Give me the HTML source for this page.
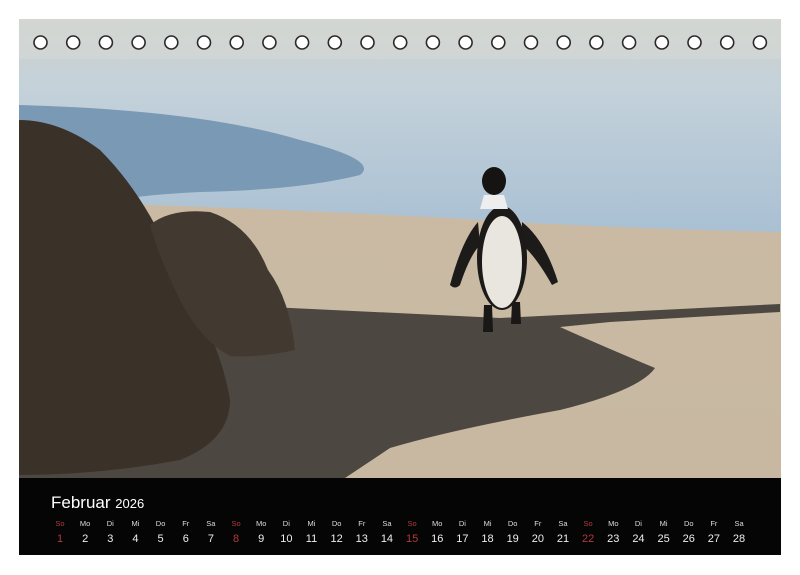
<!DOCTYPE html>
<html><head><meta charset="utf-8"><style>
body{margin:0;width:800px;height:575px;background:#fff;overflow:hidden;font-family:"Liberation Sans",sans-serif;position:relative}
.cal{position:absolute;left:19px;top:478px;width:762px;height:77px;background:#050505}
.t{position:absolute;left:32px;top:15px;color:#fff;font-size:17px}
.t span{font-size:13px}
.d{position:absolute;width:30px;text-align:center;color:#eee}
.n{font-size:7.5px;top:41px;color:#ddd}
.v{font-size:11px;top:55px}
.r{color:#b3393f}
</style></head><body>
<svg width="800" height="575" style="position:absolute;left:0;top:0">
<defs>
<linearGradient id="w" x1="0" y1="0" x2="0" y2="1"><stop offset="0" stop-color="#cfd1cc"/><stop offset="0.3" stop-color="#c5d2da"/><stop offset="1" stop-color="#a9c0d3"/></linearGradient>
<linearGradient id="s" x1="0" y1="0" x2="0" y2="1"><stop offset="0" stop-color="#cbbca7"/><stop offset="1" stop-color="#c8b8a1"/></linearGradient>
</defs>
<rect x="19" y="19" width="762" height="459" fill="url(#s)"/>
<path d="M19 19H781V232Q600 228 450 218Q300 210 150 205L19 200Z" fill="url(#w)"/>
<rect x="19" y="19" width="762" height="40" fill="#d6d8d5" opacity=".6"/>
<path d="M19 105Q200 110 300 140Q380 160 360 175Q300 190 200 192Q140 195 120 200L19 200Z" fill="#7a99b5"/>
<path d="M250 306L500 318L780 304L780 312L610 322L560 327Q600 345 655 368Q640 390 560 410Q450 430 390 448L345 478H19V380L230 330Z" fill="#4d4741"/>
<path d="M19 120Q60 120 100 150Q150 200 180 280Q220 340 230 400Q230 440 180 460Q100 475 19 475Z" fill="#3a3129"/>
<path d="M150 225Q170 208 210 212Q250 225 268 270Q290 300 295 350Q260 358 230 356Q200 340 180 300Q160 260 150 225Z" fill="#423a31"/>
<path d="M478 222Q462 240 450 285Q455 290 460 285Q470 255 480 245Z" fill="#1d1b1a"/>
<path d="M522 222Q545 240 558 282L552 285Q535 255 522 245Z" fill="#1d1b1a"/>
<ellipse cx="502" cy="258" rx="25" ry="52" fill="#1c1a19"/>
<ellipse cx="502" cy="262" rx="20" ry="46" fill="#e9e6df"/>
<path d="M484 195h20l4 14h-28z" fill="#eee"/>
<ellipse cx="494" cy="181" rx="12" ry="14" fill="#151413"/>
<path d="M484 305l8 0 1 27h-10zM512 302l8 0 1 22h-10z" fill="#1a1817"/>
<g fill="#fff" stroke="#2a2a2a" stroke-width="1.6">
<circle cx="40.5" cy="42.5" r="6.5"/><circle cx="73.2" cy="42.5" r="6.5"/><circle cx="105.9" cy="42.5" r="6.5"/><circle cx="138.6" cy="42.5" r="6.5"/><circle cx="171.3" cy="42.5" r="6.5"/><circle cx="204" cy="42.5" r="6.5"/><circle cx="236.7" cy="42.5" r="6.5"/><circle cx="269.4" cy="42.5" r="6.5"/><circle cx="302.1" cy="42.5" r="6.5"/><circle cx="334.8" cy="42.5" r="6.5"/><circle cx="367.5" cy="42.5" r="6.5"/><circle cx="400.2" cy="42.5" r="6.5"/><circle cx="432.9" cy="42.5" r="6.5"/><circle cx="465.6" cy="42.5" r="6.5"/><circle cx="498.3" cy="42.5" r="6.5"/><circle cx="531" cy="42.5" r="6.5"/><circle cx="563.7" cy="42.5" r="6.5"/><circle cx="596.4" cy="42.5" r="6.5"/><circle cx="629.1" cy="42.5" r="6.5"/><circle cx="661.8" cy="42.5" r="6.5"/><circle cx="694.5" cy="42.5" r="6.5"/><circle cx="727.2" cy="42.5" r="6.5"/><circle cx="759.9" cy="42.5" r="6.5"/>
</g>
</svg>
<div class="cal"><div class="t">Februar <span>2026</span></div><div id="g"></div></div>
<script>
var n=["So","Mo","Di","Mi","Do","Fr","Sa"],h="";
for(var i=0;i<28;i++){var x=60+i*25.15-19-15,r=i%7==0?" r":"";
h+='<div class="d n'+r+'" style="left:'+x+'px">'+n[i%7]+'</div><div class="d v'+r+'" style="left:'+x+'px">'+(i+1)+'</div>';}
document.getElementById("g").innerHTML=h;
</script>
</body></html>
